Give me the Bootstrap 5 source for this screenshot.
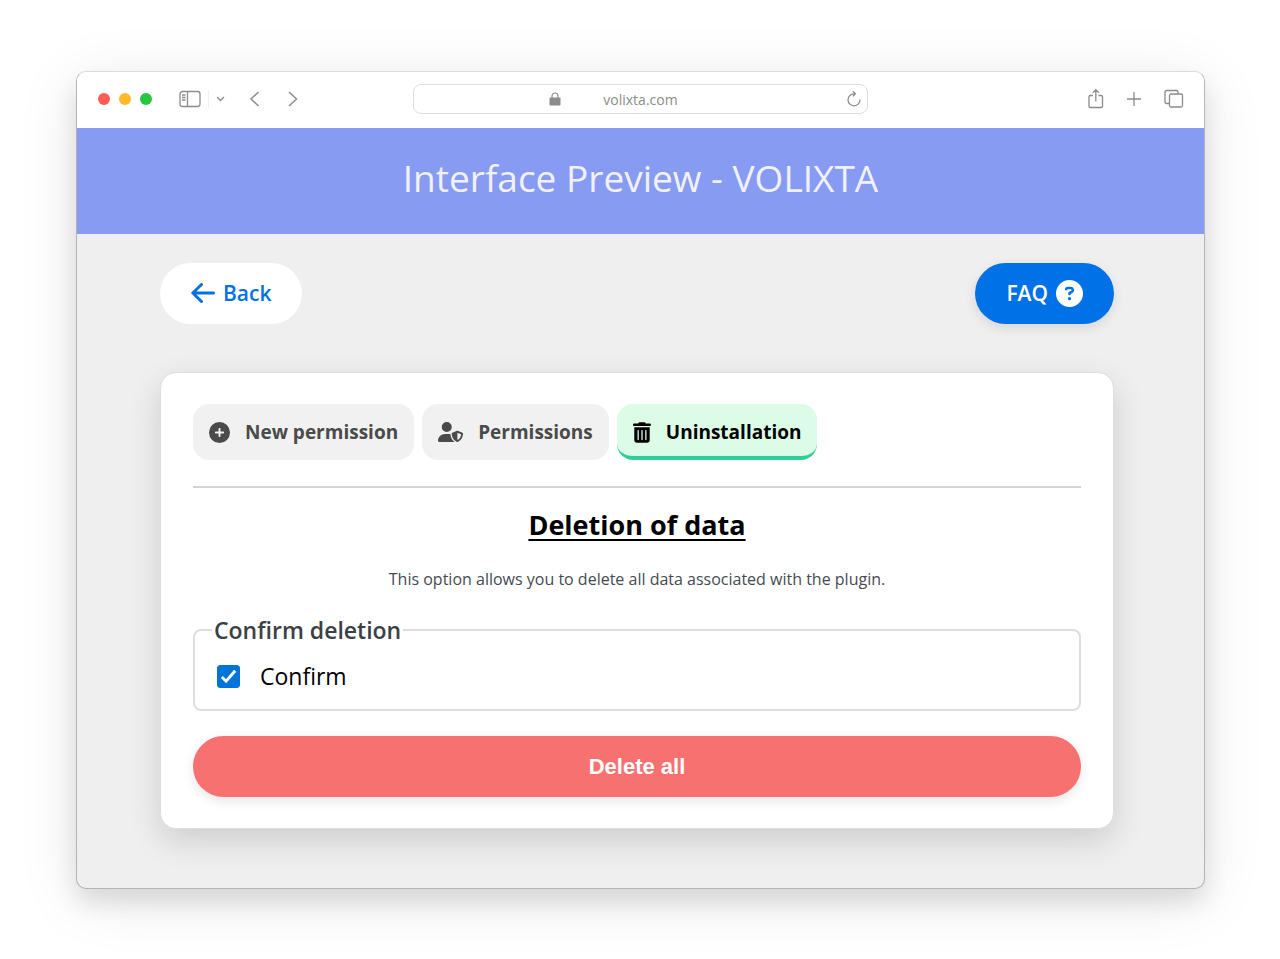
<!DOCTYPE html>
<html lang="en">
<head>
<meta charset="utf-8">
<meta name="viewport" content="width=device-width, initial-scale=1">
<title>Interface Preview - VOLIXTA</title>
<link href="https://cdn.jsdelivr.net/npm/bootstrap@5.3.0/dist/css/bootstrap.min.css" rel="stylesheet">
<style>
  body { font-family: "Open Sans", "Noto Sans", sans-serif; background: #fff; color: #000; }
  .stage { padding: 71px 75px 70px 76px; }
  .browser { background: #efefef; border: 1px solid #b4b4b4; border-top-color: #dcdcdc; border-radius: 10px; overflow: hidden;
    box-shadow: 0 14px 24px rgba(0,0,0,.11), 0 10px 64px rgba(0,0,0,.09); }
  .toolbar { height: 56px; padding-bottom: 2px; background: #fff; display: grid; grid-template-columns: 1fr minmax(0, 455px) 1fr; color: #8c8c8c; }
  .toolbar button { background: none; border: 0; padding: 0; color: inherit; display: flex; }
  .toolbar svg, .pill svg, .tab-btn svg { display: block; flex: none; }
  .dots { gap: 9px; padding-left: 21px; }
  .dot { width: 12px; height: 12px; border-radius: 50%; }
  .dot-close { background: #ff5c55; }
  .dot-min { background: #fdb92c; }
  .dot-max { background: #27c83f; }
  .split { width: 1px; height: 18px; background: #f0f0f0; }
  .address { height: 30px; border: 1px solid #dedede; border-radius: 8px; display: grid; grid-template-columns: 1fr auto 1fr; }
  .address input { width: 80px; border: 0; padding: 0; outline: 0; text-align: center; color: #8c8c8c; font-size: 14px; background: none; }
  .lock { margin-right: 40px; }
  .banner { background: #889bf3; color: #f1f1f4; height: 106px; padding-top: 22px; }
  .banner h1 { font-size: 37px; line-height: 56px; font-weight: 400; }
  .page { padding: 29px 90px 59px 83px; }
  .pill { height: 61px; border-radius: 31px; padding: 0 31px; font-weight: 600; font-size: 21px; border: 0; text-decoration: none; }
  .pill-back { background: #fff; color: #0071e6; }
  .pill-faq { background: #0071e6; color: #fff; box-shadow: 0 4px 12px rgba(0,0,0,.1); }
  .panel { margin-top: 48px; background: #fff; border: 1px solid #dedede; border-radius: 16px; padding: 31px;
    box-shadow: 0 12px 32px rgba(0,0,0,.14); }
  .tab-btn { height: 56px; gap: 15px; border: 0; border-radius: 16px; background: #f1f1f1; color: #4a4a4a; padding: 0 16px; font-size: 19px; font-weight: 700; }
  .tab-btn.active { background: #dcfce7; color: #000; border-bottom: 4px solid #2ad094; padding-top: 4px; }
  .rule { border: 0; border-top: 2px solid #d4d4d4; margin: 26px 0 19px; opacity: 1; }
  .panel h2 { font-size: 27px; line-height: 36px; font-weight: 700; text-decoration: underline; text-decoration-thickness: 2px; text-underline-offset: 4px; margin: 0 0 23px; }
  .intro { font-size: 16px; line-height: 26px; color: #444b52; margin: 0 0 23px; }
  .confirm-box { border: 2px solid #dedede; border-radius: 8px; padding: 0 22px 17px 17px; margin: 0 0 25px; }
  .confirm-box legend { float: none; width: auto; font-size: 23px; line-height: 30px; font-weight: 600; color: #3b4047; padding: 0 2px; margin: 0 0 15px; }
  .confirm-box .form-check-input { width: 23px; height: 23px; margin: 0 0 0 5px; border-radius: 3px; }
  .confirm-box .form-check-input:checked { background-color: #0075d7; border-color: #0075d7; background-size: 100%;
    background-image: url("data:image/svg+xml,%3Csvg xmlns='http://www.w3.org/2000/svg' viewBox='0 0 22 22'%3E%3Cpath fill='none' stroke='%23fff' stroke-width='3' d='m4 11.500 4.500 4.500L18 5'/%3E%3C/svg%3E"); }
  .confirm-box label { font-size: 23px; line-height: 32px; }
  .delete-btn { height: 61px; border: 0; border-radius: 31px; background: #f87171; color: #fff; font: bold 22px "Liberation Sans", Arial, sans-serif; box-shadow: 0 4px 12px rgba(0,0,0,.1); }
  .inner { padding: 0 1px; }
</style>
</head>
<body>
<div class="stage">
  <div class="browser">
    <header class="toolbar align-items-center">
      <div class="d-flex align-items-center">
        <div class="dots d-flex">
          <span class="dot dot-close"></span>
          <span class="dot dot-min"></span>
          <span class="dot dot-max"></span>
        </div>
        <button class="ms-4" type="button" aria-label="Sidebar"><svg width="28" height="18" viewBox="0 0 28 18" fill="none" stroke="currentColor" stroke-width="1.3"><rect x="4" y="1.500" width="20" height="15" rx="2.500"/><path d="M11.500 1.500v15M6 5h3.500M6 7.500h3.500M6 10h3.500"/></svg></button>
        <span class="split ms-1"></span>
        <button class="ms-2" type="button" aria-label="Tab groups"><svg width="8" height="6" viewBox="0 0 8 6" fill="none" stroke="currentColor" stroke-width="1.300"><path d="M0 1 3.500 4.500 7 1"/></svg></button>
        <button class="ms-4" type="button" aria-label="Previous"><svg width="14" height="16" viewBox="0 0 14 16" fill="none" stroke="currentColor" stroke-width="1.500"><path d="M9.500 1 2 8l7.500 7"/></svg></button>
        <button class="ms-4" type="button" aria-label="Next"><svg width="14" height="16" viewBox="0 0 14 16" fill="none" stroke="currentColor" stroke-width="1.500"><path d="m2 1 7.500 7L2 15"/></svg></button>
      </div>
      <div class="address align-items-center">
        <span class="lock ms-auto"><svg class="d-block" width="12" height="14" viewBox="0 0 12 14"><rect x=".5" y="5.500" width="11" height="8" rx="1" fill="currentColor"/><path d="M3 6V4a3 3 0 0 1 6 0v2" fill="none" stroke="currentColor" stroke-width="1.200"/></svg></span>
        <input type="text" value="volixta.com" aria-label="Address">
        <button class="ms-auto me-1" type="button" aria-label="Reload"><svg width="16" height="16" viewBox="0 0 16 16" fill="none" stroke="currentColor" stroke-width="1.300"><path d="M8 2.800H7A6 6 0 1 0 13 8.500M5.800.4l2.600 2.400-2.400 2.600"/></svg></button>
      </div>
      <div class="d-flex align-items-center justify-content-end gap-3 pe-3">
        <button type="button" aria-label="Share"><svg width="22" height="22" viewBox="0 0 22 22" fill="none" stroke="currentColor" stroke-width="1.300"><path d="M7 7.500H4.300A1.300 1.300 0 0 0 3 8.800v9.400a1.300 1.300 0 0 0 1.300 1.300h10.900a1.300 1.300 0 0 0 1.300-1.300V8.800a1.300 1.300 0 0 0-1.300-1.300h-2.700M9.800 13.500V2M6.600 4.900 9.800 1.700 13 4.900"/></svg></button>
        <button type="button" aria-label="New tab"><svg width="22" height="22" viewBox="0 0 22 22" fill="none" stroke="currentColor" stroke-width="1.300"><path d="M3 11h14M10 4v14"/></svg></button>
        <button type="button" aria-label="Tabs"><svg width="26" height="22" viewBox="0 0 26 22" fill="none" stroke="currentColor" stroke-width="1.300"><rect x="7.500" y="6" width="13" height="13" rx="1.500"/><path d="M7.500 15.500h-3A1.500 1.500 0 0 1 3 14V4a1.500 1.500 0 0 1 1.500-1.500h10A1.500 1.500 0 0 1 16 4v2"/></svg></button>
      </div>
    </header>
    <div class="banner text-center"><h1 class="m-0">Interface Preview - VOLIXTA</h1></div>
    <main class="page">
      <div class="d-flex justify-content-between">
        <a href="#" class="pill pill-back d-flex align-items-center gap-2"><svg width="24" height="22" viewBox="0 0 24 22" fill="none" stroke="currentColor" stroke-width="3" stroke-linecap="round" stroke-linejoin="round"><path d="M22.500 10H2M10.500 1.500 1.800 10l8.700 8.500"/></svg>Back</a>
        <a href="#" class="pill pill-faq d-flex align-items-center gap-2">FAQ<svg width="27" height="27" viewBox="0 0 512 512" fill="currentColor"><path d="M256 512A256 256 0 1 0 256 0a256 256 0 1 0 0 512zM169.800 165.300c7.900-22.300 29.100-37.300 52.800-37.300h58.300c34.900 0 63.100 28.300 63.100 63.100c0 22.600-12.100 43.500-31.700 54.800L280 264.400c-.2 13-10.900 23.600-24 23.600c-13.300 0-24-10.700-24-24V250.500c0-8.600 4.600-16.500 12.100-20.800l44.300-25.400c4.700-2.700 7.600-7.700 7.600-13.100c0-8.400-6.800-15.100-15.100-15.100H222.600c-3.400 0-6.400 2.100-7.500 5.300l-.4 1.200c-4.400 12.500-18.200 19-30.600 14.600s-19-18.200-14.600-30.600l.3-1.300zM224 352a32 32 0 1 1 64 0 32 32 0 1 1-64 0z"/></svg></a>
      </div>
      <section class="panel">
       <div class="inner">
        <nav class="d-flex flex-wrap gap-2">
          <button type="button" class="tab-btn d-flex align-items-center"><svg width="21" height="21" viewBox="0 0 512 512" fill="currentColor"><path d="M256 512A256 256 0 1 0 256 0a256 256 0 1 0 0 512zM232 344V280H168c-13.300 0-24-10.700-24-24s10.700-24 24-24h64V168c0-13.300 10.700-24 24-24s24 10.700 24 24v64h64c13.300 0 24 10.700 24 24s-10.700 24-24 24H280v64c0 13.300-10.700 24-24 24s-24-10.700-24-24z"/></svg>New permission</button>
          <button type="button" class="tab-btn d-flex align-items-center"><svg width="25" height="20" viewBox="0 0 640 512" fill="currentColor"><path d="M224 256A128 128 0 1 0 224 0a128 128 0 1 0 0 256zm-45.700 48C79.800 304 0 383.800 0 482.300C0 498.700 13.300 512 29.700 512H418.300c1.800 0 3.500-.2 5.300-.5c-76.300-55.100-99.800-141-103.100-200.200c-16.100-4.800-33.100-7.300-50.700-7.300H178.300zm308.800-78.300l-120 48C358 277.400 352 286.200 352 296c0 63.300 25.900 168.800 134.800 214.200c5.900 2.500 12.600 2.500 18.500 0C614.100 464.800 640 359.300 640 296c0-9.800-6-18.600-15.100-22.300l-120-48c-5.700-2.300-12.100-2.300-17.800 0zM591.400 312c-3.900 50.700-27.200 116.700-95.400 149.700V273.800L591.400 312z"/></svg>Permissions</button>
          <button type="button" class="tab-btn active d-flex align-items-center"><svg width="18" height="21" viewBox="0 0 448 512" fill="currentColor"><path d="M135.200 17.700C140.600 6.800 151.700 0 163.800 0H284.200c12.100 0 23.200 6.800 28.600 17.700L320 32h96c17.700 0 32 14.300 32 32s-14.300 32-32 32H32C14.300 96 0 81.700 0 64S14.300 32 32 32h96l7.200-14.300zM32 128H416V448c0 35.300-28.700 64-64 64H96c-35.300 0-64-28.700-64-64V128zm96 64c-8.800 0-16 7.200-16 16V432c0 8.800 7.200 16 16 16s16-7.200 16-16V208c0-8.800-7.200-16-16-16zm96 0c-8.800 0-16 7.200-16 16V432c0 8.800 7.200 16 16 16s16-7.200 16-16V208c0-8.800-7.200-16-16-16zm96 0c-8.800 0-16 7.200-16 16V432c0 8.800 7.200 16 16 16s16-7.200 16-16V208c0-8.800-7.200-16-16-16z"/></svg>Uninstallation</button>
        </nav>
        <hr class="rule">
        <h2 class="text-center">Deletion of data</h2>
        <p class="intro text-center">This option allows you to delete all data associated with the plugin.</p>
        <form>
          <fieldset class="confirm-box">
            <legend>Confirm deletion</legend>
            <div class="d-flex align-items-center">
              <input class="form-check-input" type="checkbox" id="confirm" checked>
              <label class="ms-3 ps-1" for="confirm">Confirm</label>
            </div>
          </fieldset>
          <button type="button" class="delete-btn w-100 d-block">Delete all</button>
        </form>
       </div>
      </section>
    </main>
  </div>
</div>
<script src="https://cdn.jsdelivr.net/npm/bootstrap@5.3.0/dist/js/bootstrap.bundle.min.js"></script>
</body>
</html>
